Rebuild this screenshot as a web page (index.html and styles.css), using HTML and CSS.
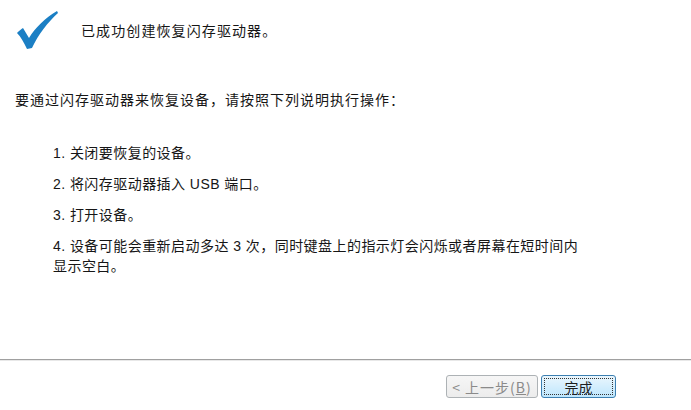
FILE: index.html
```html
<!DOCTYPE html>
<html lang="zh-CN">
<head>
    <meta charset="UTF-8">
    <title>恢复驱动器</title>
    <link rel="stylesheet" href="styles.css">
</head>
<body>
    <div class="wizard">
        <div class="content">
            <div class="header">
                <svg class="check" width="44" height="42" viewBox="0 0 44 42">
                    <path d="M2,23 C4,21 6,19 8,18 C10,21 12,25 14,28 C20,18 30,8 42,1 L43,3 C33,12 23,25 17,38 L12,39 C9,33 6,27 2,23 Z" fill="#1b7fc4"/>
                </svg>
                <h1>已成功创建恢复闪存驱动器。</h1>
            </div>

            <p class="intro">要通过闪存驱动器来恢复设备，请按照下列说明执行操作：</p>

            <ol class="steps">
                <li>1. 关闭要恢复的设备。</li>
                <li>2. 将闪存驱动器插入 USB 端口。</li>
                <li>3. 打开设备。</li>
                <li>4. 设备可能会重新启动多达 3 次，同时键盘上的指示灯会闪烁或者屏幕在短时间内显示空白。</li>
            </ol>
        </div>

        <div class="footer">
            <button class="btn btn-back" disabled>&lt; 上一步(<u>B</u>)</button>
            <button class="btn btn-finish"><span class="focus">完成</span></button>
        </div>
    </div>
</body>
</html>
```

FILE: styles.css
```css
body {
    margin: 0;
    background: #ffffff;
    font-family: "Liberation Sans", "Noto Sans CJK SC", sans-serif;
    color: #161616;
}

.wizard {
    display: flex;
    flex-direction: column;
    height: 410px;
}

.content {
    flex: 1;
}

.header {
    display: flex;
    align-items: center;
    padding: 11px 0 0 15px;
    height: 40px;
}

.check {
    display: block;
}

.header h1 {
    margin: 0 0 0 22px;
    font-size: 14px;
    font-weight: normal;
    letter-spacing: 1.1px;
    line-height: 20px;
}

.intro {
    margin: 39px 0 0 15px;
    font-size: 14px;
    letter-spacing: 1px;
    line-height: 20px;
}

.steps {
    list-style: none;
    margin: 33px 0 0 53px;
    padding: 0;
    width: 534px;
}

.steps li {
    font-size: 14px;
    letter-spacing: 0.45px;
    line-height: 20px;
    margin-bottom: 11px;
}

.footer {
    height: 51px;
    border-top: 1px solid #a0a0a0;
    box-shadow: inset 0 1px 0 #e8e8e8;
    display: flex;
    justify-content: flex-end;
    align-items: flex-start;
    gap: 3px;
    padding: 15px 75px 0 0;
    box-sizing: border-box;
}

.btn {
    height: 23px;
    font-family: "Noto Sans CJK SC", "Liberation Sans", sans-serif;
    font-size: 14px;
    border-radius: 3px;
    padding: 0;
}

.btn-back {
    width: 92px;
    border: 1px solid #adb2b5;
    background: linear-gradient(#f6f6f6, #ececec);
    color: #8a8a8a;
    letter-spacing: 1px;
    line-height: 20px;
}

.btn-finish {
    width: 75px;
    border: 1px solid #3c7fb1;
    background: linear-gradient(#eaf6fd, #bee6fd);
    color: #1e1e1e;
    padding: 2px;
}

.focus {
    display: block;
    height: 100%;
    border: 1px dotted #333;
    box-sizing: border-box;
    line-height: 16px;
}
```
